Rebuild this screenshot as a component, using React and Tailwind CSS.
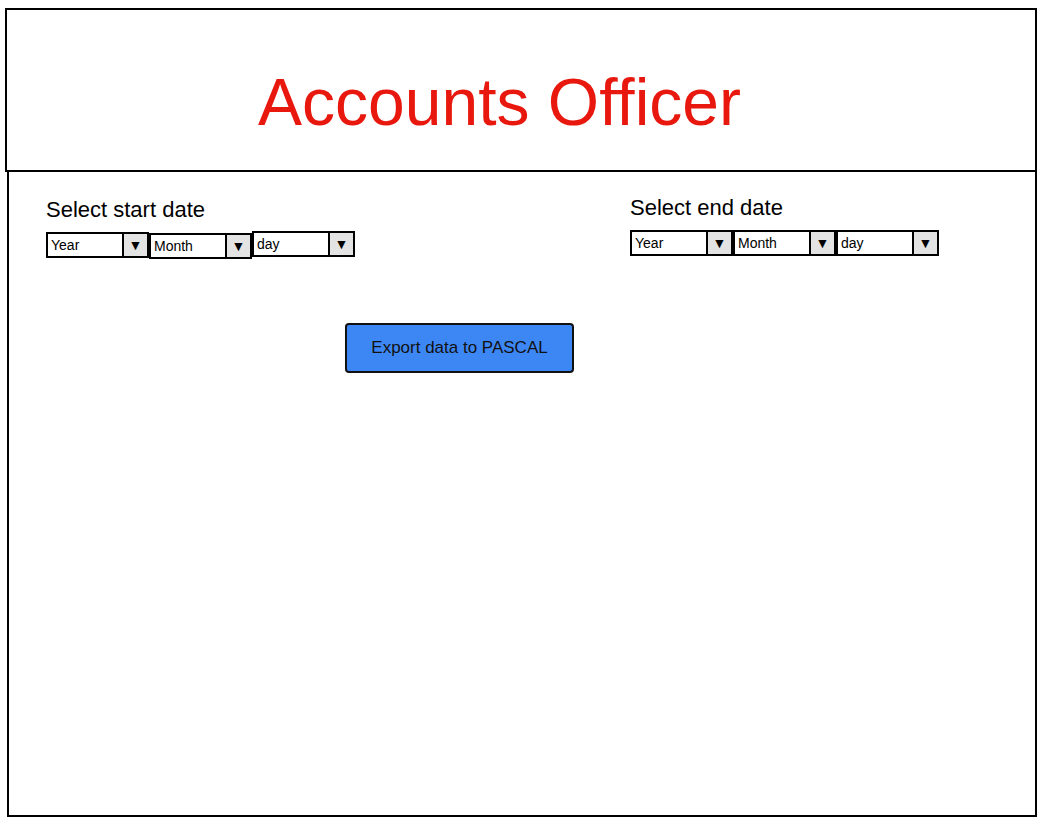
import React from "react";

function DateSelect({ label, className = "" }) {
    return (
        <div className={`flex w-[103px] h-[26px] border-2 border-black bg-white ${className}`}>
            <div className="flex-1 pl-[3px] text-[14px] leading-[22px] text-black">{label}</div>
            <div className="w-[25px] border-l-2 border-black bg-[#e3e3e3] flex items-center justify-center text-[14px] leading-none text-black">
                ▼
            </div>
        </div>
    );
}

function DateGroup({ title, offsets }) {
    return (
        <div className="flex flex-col">
            <div className="text-[22px] leading-none text-black">{title}</div>
            <div className="flex items-start mt-[10px]">
                <DateSelect label="Year" className={offsets[0]} />
                <DateSelect label="Month" className={offsets[1]} />
                <DateSelect label="day" className={offsets[2]} />
            </div>
        </div>
    );
}

export default function App() {
    return (
        <div
            className="w-[1044px] h-[825px] bg-white pt-[8px]"
            style={{ fontFamily: '"Liberation Sans", Arial, sans-serif' }}
        >
            {/* header */}
            <div className="ml-[5px] w-[1032px] h-[164px] border-2 border-black pt-[59px] pl-[251px]">
                <h1 className="text-[66px] leading-none text-[#e8180f] whitespace-nowrap">
                    Accounts Officer
                </h1>
            </div>

            {/* body */}
            <div className="ml-[7px] w-[1030px] h-[645px] border-2 border-t-0 border-black pl-[37px]">
                <div className="flex items-start">
                    <div className="w-[584px] pt-[27px]">
                        <DateGroup title="Select start date" offsets={["mt-[1px]", "mt-[2px]", "mt-0 h-[25px]"]} />
                    </div>
                    <div className="pt-[25px]">
                        <DateGroup title="Select end date" offsets={["mt-[1px] h-[25px]", "mt-[1px] h-[25px]", "mt-[1px] h-[25px]"]} />
                    </div>
                </div>

                <div className="mt-[64px] pl-[299px]">
                    <button className="w-[229px] h-[50px] bg-[#3d87f5] border-2 border-[#111] rounded-[4px] text-[17px] text-[#111]">
                        Export data to PASCAL
                    </button>
                </div>
            </div>
        </div>
    );
}
